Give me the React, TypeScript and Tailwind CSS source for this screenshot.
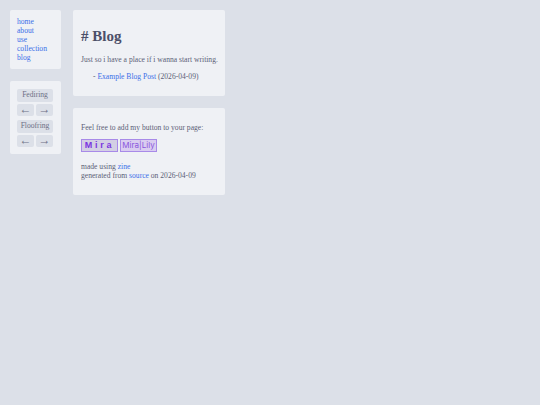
const Link = ({ children }: { children: React.ReactNode }) => (
  <a href="#" className="text-[#3b6fe8]">
    {children}
  </a>
);

const Ring = ({ name }: { name: string }) => (
  <div className="flex flex-col gap-[2px]">
    <div className="h-[12.5px] leading-[12.5px] rounded-[2px] bg-[#dce0e8] text-center text-[#6c6f85]">{name}</div>
    <div className="flex gap-[2px]">
      <button className="flex-1 h-[12.5px] leading-[10px] pb-[2.5px] rounded-[2px] bg-[#dce0e8] text-[#6c6f85] text-[12px] text-center">←</button>
      <button className="flex-1 h-[12.5px] leading-[10px] pb-[2.5px] rounded-[2px] bg-[#dce0e8] text-[#6c6f85] text-[12px] text-center">→</button>
    </div>
  </div>
);

export default function App() {
  return (
    <div className="min-h-[405px] bg-[#dce0e8] p-[10px] flex gap-3 items-start text-[#5c5f77] text-[7.6px] leading-[9px] font-['Liberation_Serif',serif] opacity-[0.995]">
      <aside className="w-[51px] flex flex-col gap-3">
        <nav className="rounded-[2px] bg-[#eff1f5] px-[7px] py-[7px] flex flex-col">
          <Link>home</Link>
          <Link>about</Link>
          <Link>use</Link>
          <Link>collection</Link>
          <Link>blog</Link>
        </nav>
        <div className="rounded-[2px] bg-[#eff1f5] pl-[7px] pr-[8px] pt-[8px] pb-[7px] flex flex-col gap-[4px]">
          <Ring name="Fediring" />
          <Ring name="Floofring" />
        </div>
      </aside>
      <main className="w-[152px] flex flex-col gap-3">
        <section className="h-[86px] rounded-[2px] bg-[#eff1f5] px-2 pt-[17px]">
          <h1 className="text-[15px] leading-[18px] font-bold text-[#4c4f69]">
            # Blog
          </h1>
          <p className="mt-[10px] leading-[10px] whitespace-nowrap">Just so i have a place if i wanna start writing.</p>
          <p className="mt-[7px] pl-3 leading-[10px] whitespace-nowrap">
            - <Link>Example Blog Post</Link> (2026-04-09)
          </p>
        </section>
        <section className="h-[87px] rounded-[2px] bg-[#eff1f5] px-2 pt-[15px]">
          <p className="leading-[10px] whitespace-nowrap">Feel free to add my button to your page:</p>
          <div className="mt-[6px] flex gap-[2px] items-center">
            <div className="w-[37px] h-[13px] border border-[#a88ae8] bg-[#d3cfe4] text-[#7a35e0] text-[9px] leading-[11px] font-bold tracking-[2.8px] text-center font-['Liberation_Sans',sans-serif]">
              Mira
            </div>
            <div className="w-[37px] h-[13px] border border-[#a88ae8] bg-[#d9ccf0] text-[#8a55dd] text-[8px] leading-[11px] text-center font-['Inter',sans-serif] whitespace-nowrap">
              Mira|Lily
            </div>
          </div>
          <p className="mt-[9.5px] leading-[9px]">
            made using <Link>zine</Link>
          </p>
          <p className="leading-[9px] whitespace-nowrap">
            generated from <Link>source</Link> on 2026-04-09
          </p>
        </section>
      </main>
    </div>
  );
}
